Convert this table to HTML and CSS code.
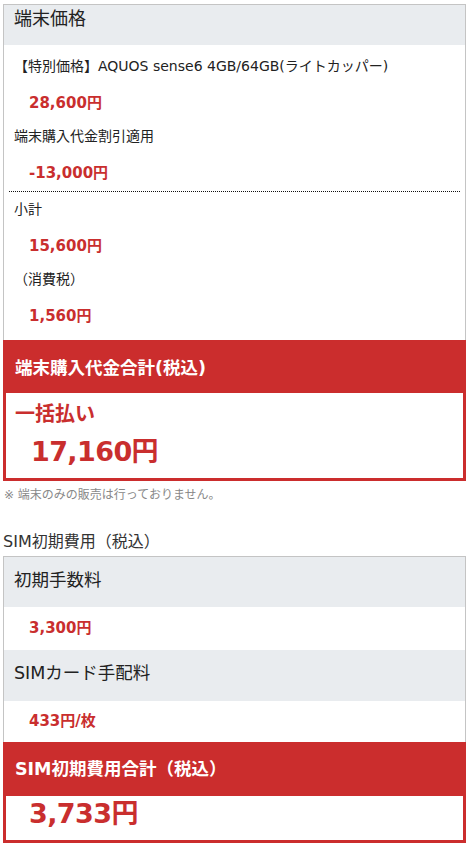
FILE: index.html
```html
<!DOCTYPE html>
<html lang="ja">
<head>
<meta charset="utf-8">
<title>料金</title>
<link rel="stylesheet" href="styles.css">
</head>
<body>
<div class="page">
  <section class="card">
    <div class="card-head">端末価格</div>
    <div class="card-body">
      <p class="label">【特別価格】AQUOS sense6 4GB/64GB(ライトカッパー)</p>
      <p class="price">28,600円</p>
      <p class="label">端末購入代金割引適用</p>
      <p class="price price-last">-13,000円</p>
      <hr class="dotted">
      <p class="label">小計</p>
      <p class="price">15,600円</p>
      <p class="label">（消費税）</p>
      <p class="price price-end">1,560円</p>
    </div>
  </section>
  <section class="total">
    <div class="total-head">端末購入代金合計(税込)</div>
    <div class="total-body">
      <p class="total-label">一括払い</p>
      <p class="total-price">17,160円</p>
    </div>
  </section>
  <p class="note">※ 端末のみの販売は行っておりません。</p>
  <h2 class="sec-title">SIM初期費用（税込）</h2>
  <section class="card">
    <div class="fee-head">初期手数料</div>
    <div class="fee-val">3,300円</div>
    <div class="fee-head fee-head-2">SIMカード手配料</div>
    <div class="fee-val fee-val-2">433円/枚</div>
  </section>
  <section class="total">
    <div class="total-head total-head-2">SIM初期費用合計（税込）</div>
    <div class="total-body total-body-2">
      <p class="total-price total-price-2">3,733円</p>
    </div>
  </section>
</div>
</body>
</html>
```
FILE: styles.css
```css
* { box-sizing: border-box; }
html, body { margin: 0; padding: 0; background: #fff; }
body {
  font-family: "DejaVu Sans", "Noto Sans CJK JP", sans-serif;
  color: #222;
}
p, h2 { margin: 0; }
.page {
  padding: 4px 4px 0 3px;
}
.card {
  border: 1px solid #c4c4c4;
  border-bottom: none;
}
.card-head {
  background: #e9ecef;
  height: 40px;
  padding: 0 10px;
  font-size: 18px;
  line-height: 27px;
  color: #222;
}
.card-body {
  padding: 11px 0 14px;
}
.label {
  font-size: 14px;
  line-height: 20px;
  padding-left: 10px;
  margin-bottom: 17px;
}
.price {
  font-size: 15px;
  font-weight: bold;
  line-height: 20px;
  color: #c92e2e;
  padding-left: 25px;
  margin-bottom: 13px;
}
.price-last { margin-bottom: 8px; }
.price-end { margin-bottom: 0; }
.dotted {
  border: none;
  border-top: 1px dotted #111;
  margin: 0 5px 7px;
  height: 0;
}
.total-head {
  background: #cb2d2d;
  color: #fff;
  font-weight: bold;
  font-size: 17.5px;
  line-height: 24px;
  padding: 16px 12px 13px;
}
.total-body {
  border: 3px solid #cb2d2d;
  border-top: none;
  padding: 7px 9px 8px;
}
.total-label {
  color: #c92e2e;
  font-weight: bold;
  font-size: 20px;
  line-height: 28px;
}
.total-price {
  color: #c92e2e;
  font-weight: bold;
  font-size: 27px;
  letter-spacing: -0.6px;
  line-height: 36px;
  margin-top: 6px;
  padding-left: 16px;
}
.note {
  font-size: 12px;
  line-height: 18px;
  color: #888;
  margin-top: 5px;
  padding-left: 1px;
}
.sec-title {
  font-weight: normal;
  font-size: 16px;
  line-height: 22px;
  color: #333;
  margin-top: 27px;
  margin-bottom: 3px;
}
.fee-head {
  background: #e9ecef;
  font-size: 17.5px;
  line-height: 26px;
  padding: 10px 10px 14px;
}
.fee-head-2 { padding-bottom: 15px; }
.fee-val {
  font-size: 15px;
  font-weight: bold;
  line-height: 22px;
  color: #c92e2e;
  padding: 10px 10px 11px 25px;
}
.fee-val-2 { padding: 9px 10px 10px 25px; }
.total-head-2 { padding: 15px 12px 15px; }
.total-body-2 { padding: 0 9px 8px; }
.total-price-2 { margin-top: 0; padding-left: 14px; }
```
